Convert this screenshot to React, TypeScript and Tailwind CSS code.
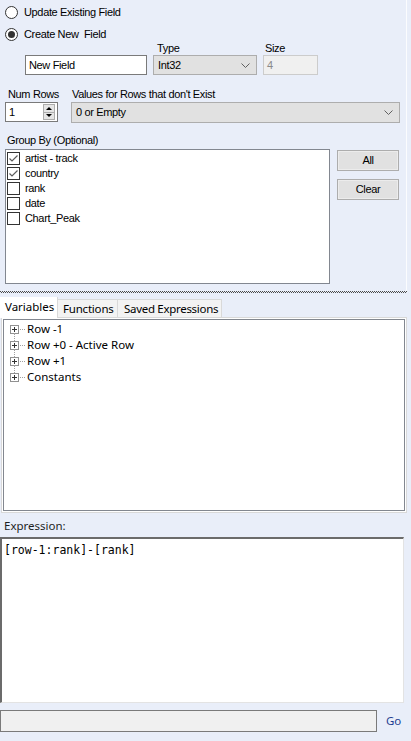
import React from 'react';

const groupFields = [
  { name: 'artist - track', checked: true },
  { name: 'country', checked: true },
  { name: 'rank', checked: false },
  { name: 'date', checked: false },
  { name: 'Chart_Peak', checked: false },
];

const treeNodes = ['Row -1', 'Row +0 - Active Row', 'Row +1', 'Constants'];

function Radio({ checked, label }: { checked?: boolean; label: string }) {
  return (
    <div className="flex items-center h-[14px] ml-[5px]">
      <div className="w-[13px] h-[13px] rounded-full border border-[#333] bg-white flex items-center justify-center">
        {checked && <div className="w-[7px] h-[7px] rounded-full bg-[#333]" />}
      </div>
      <span className="ml-[6px] whitespace-pre">{label}</span>
    </div>
  );
}

function Chevron() {
  return (
    <svg width="9" height="5" viewBox="0 0 9 5" className="shrink-0">
      <polyline points="0.5,0.5 4.5,4.5 8.5,0.5" fill="none" stroke="#606060" strokeWidth="1" />
    </svg>
  );
}

function Check({ checked }: { checked: boolean }) {
  return (
    <div className="w-[13px] h-[13px] border border-[#333] bg-white shrink-0">
      {checked && (
        <svg width="11" height="11" viewBox="0 0 11 11">
          <polyline points="1.5,5.5 4,8 9.5,2.5" fill="none" stroke="#5c5c5c" strokeWidth="1.2" />
        </svg>
      )}
    </div>
  );
}

function PlusBox() {
  return (
    <div className="w-[9px] h-[9px] border border-[#919191] bg-white flex items-center justify-center relative">
      <div className="absolute w-[5px] h-px bg-[#333]" />
      <div className="absolute w-px h-[5px] bg-[#333]" />
    </div>
  );
}

export default function App() {
  return (
    <div className="w-[411px] h-[741px] bg-[#e9eef9] overflow-hidden flex flex-col text-black font-['Liberation_Sans',Arial,sans-serif] text-[11px] tracking-[-0.35px]">
      {/* top panel */}
      <div className="h-[291px] w-[407px] border-r border-[#fbfcfe] pt-[5px] flex flex-col shrink-0">
        <Radio label="Update Existing Field" />
        <div className="mt-[8px]">
          <Radio checked label="Create New  Field" />
        </div>

        <div className="flex mt-[1px]">
          <div className="ml-[25px] w-[122px]">
            <div className="h-[13px]" />
            <div className="h-[20px] border border-[#7a7a7a] bg-white pl-[3px] leading-[18px]">New Field</div>
          </div>
          <div className="ml-[6px] w-[104px]">
            <div className="h-[13px] leading-[13px] pl-[4px]">Type</div>
            <div className="h-[20px] border border-[#adadad] bg-[#e1e1e1] pl-[4px] pr-[6px] flex items-center justify-between">
              <span>Int32</span>
              <Chevron />
            </div>
          </div>
          <div className="ml-[6px] w-[55px]">
            <div className="h-[13px] leading-[13px] pl-[2px]">Size</div>
            <div className="h-[20px] border border-[#cccccc] bg-[#f0f0f0] pl-[3px] leading-[18px] text-[#8a8a8a]">4</div>
          </div>
        </div>

        <div className="flex mt-[13px] h-[13px] leading-[13px]">
          <span className="ml-[8px]">Num Rows</span>
          <span className="ml-[13px]">Values for Rows that don&apos;t Exist</span>
        </div>
        <div className="flex mt-[1px]">
          <div className="ml-[5px] w-[53px] h-[20px] border border-[#7a7a7a] bg-white flex">
            <span className="flex-1 pl-[3px] leading-[18px]">1</span>
            <div className="w-[12px] my-[1px] mr-[2px] flex flex-col border border-[#adadad] bg-[#e5e5e5]">
              <div className="flex-1 flex items-center justify-center border-b border-[#adadad]">
                <div className="w-0 h-0 border-l-[3px] border-r-[3px] border-b-[3px] border-l-transparent border-r-transparent border-b-black" />
              </div>
              <div className="flex-1 flex items-center justify-center">
                <div className="w-0 h-0 border-l-[3px] border-r-[3px] border-t-[3px] border-l-transparent border-r-transparent border-t-black" />
              </div>
            </div>
          </div>
          <div className="ml-[13px] w-[329px] h-[21px] border border-[#adadad] bg-[#e1e1e1] pl-[4px] pr-[6px] flex items-center justify-between">
            <span>0 or Empty</span>
            <Chevron />
          </div>
        </div>

        <div className="mt-[11px] ml-[7px] h-[13px] leading-[13px]">Group By (Optional)</div>

        <div className="flex mt-[2px]">
          <div className="ml-[5px] w-[325px] h-[135px] border border-[#828790] bg-white pt-[1px]">
            {groupFields.map((f) => (
              <div key={f.name} className="flex items-center h-[15px] pl-[1px]">
                <Check checked={f.checked} />
                <span className="ml-[5px]">{f.name}</span>
              </div>
            ))}
          </div>
          <div className="ml-[7px] flex flex-col gap-[8px] pt-[1px]">
            <button className="w-[62px] h-[21px] border border-[#adadad] bg-[#e1e1e1] outline outline-1 -outline-offset-2 outline-[#ececec]">All</button>
            <button className="w-[62px] h-[21px] border border-[#adadad] bg-[#e1e1e1] outline outline-1 -outline-offset-2 outline-[#ececec]">Clear</button>
          </div>
        </div>
      </div>

      {/* splitter */}
      <div className="w-[407px] shrink-0">
        <div className="h-px bg-[repeating-linear-gradient(90deg,#4a4a4a_0px,#4a4a4a_1px,transparent_1px,transparent_2px)]" />
        <div className="h-px bg-[repeating-linear-gradient(90deg,transparent_0px,transparent_1px,#4a4a4a_1px,#4a4a4a_2px)]" />
      </div>

      {/* lower half */}
      <div className="font-['Segoe_UI','Noto_Sans',sans-serif] text-[11.5px] tracking-normal flex flex-col">
        <div className="mt-[4px] h-[20px] flex items-end relative z-10 whitespace-nowrap">
          <div className="w-[58px] h-[21px] -mb-px bg-white border-r border-[#d9d9d9] pl-[5px] pt-[1px]">Variables</div>
          <div className="w-[60px] h-[18px] bg-[#f3f3f3] border-t border-r border-[#d9d9d9] pl-[5px] leading-[17px] tracking-[-0.2px]">Functions</div>
          <div className="w-[104px] h-[18px] bg-[#f3f3f3] border-t border-r border-[#d9d9d9] pl-[6px] leading-[17px] tracking-[-0.3px]">Saved Expressions</div>
        </div>
        <div className="ml-[1px] w-[406px] h-[196px] border border-[#d9d9d9] bg-white p-[1px]">
          <div className="h-full border border-[#828790] bg-white pt-[1px]">
            {treeNodes.map((n, i) => (
              <div key={n} className="flex items-center h-[16px] relative">
                <div className="ml-[6px]"><PlusBox /></div>
                <div className="w-[5px] border-t border-dotted border-[#a0a0a0] ml-px" />
                {i < treeNodes.length - 1 && (
                  <div className="absolute left-[10px] top-[12px] h-[8px] border-l border-dotted border-[#a0a0a0]" />
                )}
                <span className="ml-[2px]">{n}</span>
              </div>
            ))}
          </div>
        </div>

        <div className="mt-[6px] ml-[4px] h-[14px] leading-[14px] text-[#1e1e1e]">Expression:</div>
        <div className="mt-[4px] w-[404px] h-[166px] bg-white border-t-2 border-l-2 border-r border-b border-t-[#6b6b6b] border-l-[#6b6b6b] border-r-[#e3e3e3] border-b-[#e3e3e3] pl-[2px] pt-[3px] font-['DejaVu_Sans_Mono',monospace] text-[11.5px] leading-[16px]">
          [row-1:rank]-[rank]
        </div>

        <div className="mt-[7px] flex items-center">
          <div className="w-[377px] h-[22px] border border-[#7a7a7a] bg-[#f0f0f0]" />
          <span className="ml-[9px] text-[#1f3f91]">Go</span>
        </div>
      </div>
    </div>
  );
}
